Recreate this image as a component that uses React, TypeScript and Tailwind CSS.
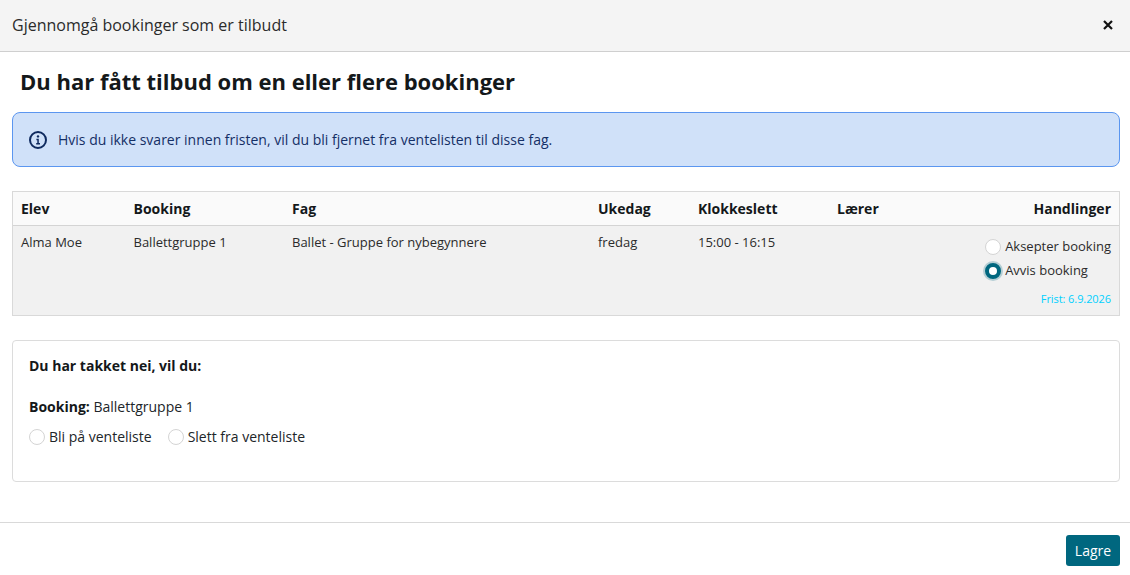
const columns = [
  { label: "Elev", value: "Alma Moe", width: "w-[112.5px]" },
  { label: "Booking", value: "Ballettgruppe 1", width: "w-[158.5px]" },
  { label: "Fag", value: "Ballet - Gruppe for nybegynnere", width: "w-[306px]" },
  { label: "Ukedag", value: "fredag", width: "w-[100px]" },
  { label: "Klokkeslett", value: "15:00 - 16:15", width: "w-[139px]" },
  { label: "Lærer", value: "", width: "w-[120px]" },
];

const Radio = ({ checked = false }: { checked?: boolean }) =>
  checked ? (
    <span className="box-content w-[8px] h-[8px] rounded-full bg-white border-[4px] border-[#00677f] shadow-[0_0_0_2px_rgba(0,103,127,0.25)] shrink-0" />
  ) : (
    <span className="w-[16px] h-[16px] rounded-full bg-white border border-[#d4d4d4] shrink-0" />
  );

const InfoIcon = () => (
  <svg width="18" height="18" viewBox="0 0 18 18" fill="none" className="shrink-0">
    <circle cx="9" cy="9" r="8" stroke="#0f2a5f" strokeWidth="2" />
    <circle cx="9" cy="5.4" r="1.2" fill="#0f2a5f" />
    <path d="M7.4 7.8H9.8V12H11V13.4H7.2V12H8.3V9.2H7.4Z" fill="#0f2a5f" />
  </svg>
);

const CloseIcon = () => (
  <svg width="10" height="10" viewBox="0 0 10 10" fill="none">
    <path d="M1 1L9 9M9 1L1 9" stroke="#111" strokeWidth="2.2" />
  </svg>
);

export default function App() {
  return (
    <div className="w-[1130px] h-[575px] overflow-hidden bg-white text-[#212529] font-['Open_Sans',sans-serif] text-[14px]">
      <div className="h-[52px] flex items-center justify-between pl-[12px] pr-[17px] pb-[1px] bg-[#f4f4f4] border-b border-[#cfcfcf]">
        <span className="text-[16px] text-[#2b2b2b]">Gjennomgå bookinger som er tilbudt</span>
        <CloseIcon />
      </div>

      <div className="pl-[12px] pr-[10px]">
        <h1 className="pl-[8px] pt-[13px] h-[60px] text-[22px] leading-[32px] font-bold text-[#14181a]">
          Du har fått tilbud om en eller flere bookinger
        </h1>

        <div className="h-[55px] flex items-center gap-[11px] pl-[16px] rounded-[8px] bg-[#d0e1f9] border border-[#5b96f0] text-[#142f66]">
          <InfoIcon />
          <span>Hvis du ikke svarer innen fristen, vil du bli fjernet fra ventelisten til disse fag.</span>
        </div>

        <div className="mt-[24px] h-[125px] border border-[#d9d9d9] text-[13px]">
          <div className="h-[34px] flex items-center pl-[8px] pr-[8px] bg-[#fafafa] border-b border-[#d4d4d4] text-[14px] font-bold text-[#14181a]">
            {columns.map((col) => (
              <span key={col.label} className={col.width}>
                {col.label}
              </span>
            ))}
            <span className="flex-1 text-right">Handlinger</span>
          </div>
          <div className="h-[89px] flex pl-[8px] pr-[8px] pt-[7px] bg-[#f1f1f1] text-[#2b2b2b]">
            {columns.map((col) => (
              <span key={col.label} className={`${col.width} leading-[18px]`}>
                {col.value}
              </span>
            ))}
            <div className="flex-1 flex flex-col items-end">
              <div className="flex flex-col gap-[6px]">
                <label className="h-[18px] mt-[5px] flex items-center gap-[4px]">
                  <Radio />
                  Aksepter booking
                </label>
                <label className="h-[18px] flex items-center gap-[4px]">
                  <Radio checked />
                  Avvis booking
                </label>
              </div>
              <span className="mt-[11px] text-[11px] leading-[15px] tracking-[-0.08px] text-[#00d0ff]">Frist: 6.9.2026</span>
            </div>
          </div>
        </div>

        <div className="mt-[24px] h-[142px] pl-[16px] pt-[15px] rounded-[4px] border border-[#dcdcdc]">
          <div className="h-[20px] leading-[20px] font-bold text-[#14181a]">Du har takket nei, vil du:</div>
          <div className="mt-[21px] h-[20px] leading-[20px]">
            <span className="font-bold text-[#14181a]">Booking:</span> Ballettgruppe 1
          </div>
          <div className="mt-[9px] flex items-center gap-[16px]">
            <label className="flex items-center gap-[4px]">
              <Radio />
              Bli på venteliste
            </label>
            <label className="flex items-center gap-[4px]">
              <Radio />
              Slett fra venteliste
            </label>
          </div>
        </div>
      </div>

      <div className="mt-[40px] h-[53px] flex items-start justify-end pt-[12px] pr-[10px] border-t border-[#d9d9d9]">
        <button className="h-[31px] w-[54px] rounded-[3px] bg-[#00677f] text-white text-[14px]">Lagre</button>
      </div>
    </div>
  );
}
